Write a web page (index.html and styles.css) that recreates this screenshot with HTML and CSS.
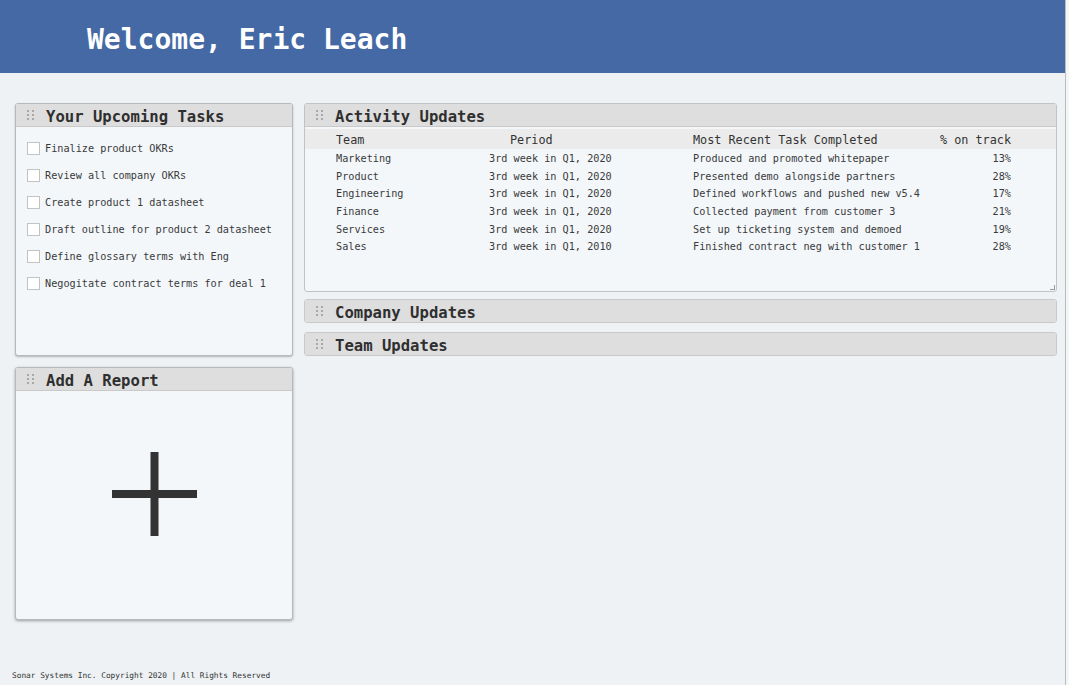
FILE: index.html
```html
<!DOCTYPE html>
<html>
<head>
<meta charset="utf-8">
<link rel="stylesheet" href="styles.css">
</head>
<body>
<div class="page">
  <header class="topbar"><h1 class="welcome">Welcome, Eric Leach</h1></header>
  <main class="main">
    <div class="col-left">
      <section class="panel tasks">
        <div class="panel-head">
          <svg class="handle" width="8" height="10" viewBox="0 0 8 10"><g fill="#a8a8a8"><rect x="0" y="0" width="2" height="2"/><rect x="5" y="0" width="2" height="2"/><rect x="0" y="4" width="2" height="2"/><rect x="5" y="4" width="2" height="2"/><rect x="0" y="8" width="2" height="2"/><rect x="5" y="8" width="2" height="2"/></g></svg>
          <span class="panel-title">Your Upcoming Tasks</span>
        </div>
        <ul class="task-list">
          <li class="task"><span class="box"></span>Finalize product OKRs</li>
          <li class="task"><span class="box"></span>Review all company OKRs</li>
          <li class="task"><span class="box"></span>Create product 1 datasheet</li>
          <li class="task"><span class="box"></span>Draft outline for product 2 datasheet</li>
          <li class="task"><span class="box"></span>Define glossary terms with Eng</li>
          <li class="task"><span class="box"></span>Negogitate contract terms for deal 1</li>
        </ul>
      </section>
      <section class="panel report">
        <div class="panel-head">
          <svg class="handle" width="8" height="10" viewBox="0 0 8 10"><g fill="#a8a8a8"><rect x="0" y="0" width="2" height="2"/><rect x="5" y="0" width="2" height="2"/><rect x="0" y="4" width="2" height="2"/><rect x="5" y="4" width="2" height="2"/><rect x="0" y="8" width="2" height="2"/><rect x="5" y="8" width="2" height="2"/></g></svg>
          <span class="panel-title">Add A Report</span>
        </div>
        <div class="report-body">
          <svg class="plus" width="85" height="84" viewBox="0 0 85 84"><g fill="#333333"><rect x="38.5" y="0" width="8" height="84"/><rect x="0" y="38" width="85" height="8"/></g></svg>
        </div>
      </section>
    </div>
    <div class="col-right">
      <section class="panel activity">
        <div class="panel-head">
          <svg class="handle" width="8" height="10" viewBox="0 0 8 10"><g fill="#a8a8a8"><rect x="0" y="0" width="2" height="2"/><rect x="5" y="0" width="2" height="2"/><rect x="0" y="4" width="2" height="2"/><rect x="5" y="4" width="2" height="2"/><rect x="0" y="8" width="2" height="2"/><rect x="5" y="8" width="2" height="2"/></g></svg>
          <span class="panel-title">Activity Updates</span>
        </div>
        <div class="table">
          <div class="trow thead">
            <span class="c-team">Team</span>
            <span class="c-period head-period">Period</span>
            <span class="c-task">Most Recent Task Completed</span>
            <span class="c-pct">% on track</span>
          </div>
          <div class="trow"><span class="c-team">Marketing</span><span class="c-period">3rd week in Q1, 2020</span><span class="c-task">Produced and promoted whitepaper</span><span class="c-pct">13%</span></div>
          <div class="trow"><span class="c-team">Product</span><span class="c-period">3rd week in Q1, 2020</span><span class="c-task">Presented demo alongside partners</span><span class="c-pct">28%</span></div>
          <div class="trow"><span class="c-team">Engineering</span><span class="c-period">3rd week in Q1, 2020</span><span class="c-task">Defined workflows and pushed new v5.4</span><span class="c-pct">17%</span></div>
          <div class="trow"><span class="c-team">Finance</span><span class="c-period">3rd week in Q1, 2020</span><span class="c-task">Collected payment from customer 3</span><span class="c-pct">21%</span></div>
          <div class="trow"><span class="c-team">Services</span><span class="c-period">3rd week in Q1, 2020</span><span class="c-task">Set up ticketing system and demoed</span><span class="c-pct">19%</span></div>
          <div class="trow"><span class="c-team">Sales</span><span class="c-period">3rd week in Q1, 2010</span><span class="c-task">Finished contract neg with customer 1</span><span class="c-pct">28%</span></div>
        </div>
        <span class="resize"></span>
      </section>
      <section class="panel bar company">
        <div class="panel-head">
          <svg class="handle" width="8" height="10" viewBox="0 0 8 10"><g fill="#a8a8a8"><rect x="0" y="0" width="2" height="2"/><rect x="5" y="0" width="2" height="2"/><rect x="0" y="4" width="2" height="2"/><rect x="5" y="4" width="2" height="2"/><rect x="0" y="8" width="2" height="2"/><rect x="5" y="8" width="2" height="2"/></g></svg>
          <span class="panel-title">Company Updates</span>
        </div>
      </section>
      <section class="panel bar team">
        <div class="panel-head">
          <svg class="handle" width="8" height="10" viewBox="0 0 8 10"><g fill="#a8a8a8"><rect x="0" y="0" width="2" height="2"/><rect x="5" y="0" width="2" height="2"/><rect x="0" y="4" width="2" height="2"/><rect x="5" y="4" width="2" height="2"/><rect x="0" y="8" width="2" height="2"/><rect x="5" y="8" width="2" height="2"/></g></svg>
          <span class="panel-title">Team Updates</span>
        </div>
      </section>
    </div>
  </main>
  <footer class="footer">Sonar Systems Inc. Copyright 2020 | All Rights Reserved</footer>
</div>
</body>
</html>
```

FILE: styles.css
```css
html, body {
  margin: 0;
  padding: 0;
  background: #f4f5f6;
}
body {
  font-family: "DejaVu Sans Mono", "Liberation Mono", monospace;
  color: #333;
}
.page {
  width: 1066px;
  height: 685px;
  background: #eef2f5;
  border-right: 1px solid #b9bcc0;
  box-sizing: border-box;
}
.topbar {
  height: 73px;
  background: #4469a5;
  display: flex;
  align-items: center;
  padding-left: 87px;
  width: 1065px;
  box-sizing: border-box;
}
.welcome {
  margin: 0;
  padding-top: 6px;
  font-size: 28px;
  font-weight: bold;
  color: #ffffff;
}
.main {
  display: flex;
  gap: 11px;
  padding: 30px 0 0 15px;
}
.col-left {
  width: 278px;
  display: flex;
  flex-direction: column;
  gap: 11px;
}
.col-right {
  width: 753px;
  display: flex;
  flex-direction: column;
}
.panel {
  position: relative;
  background: #f3f7fa;
  border: 1px solid #b9b9b9;
  border-radius: 3px;
  box-sizing: border-box;
  box-shadow: 0 1px 2px rgba(0, 0, 0, 0.25);
  overflow: hidden;
}
.panel-head {
  height: 22px;
  background: #dedede;
  border-bottom: 1px solid #c9c9c9;
  display: flex;
  align-items: center;
  padding-left: 11px;
}
.handle {
  display: block;
  margin-right: 11px;
  flex: none;
}
.panel-title {
  font-size: 15.6px;
  font-weight: bold;
  color: #2f2f2f;
  line-height: 22px;
  padding-top: 3px;
}
.tasks {
  height: 253px;
}
.task-list {
  list-style: none;
  margin: 0;
  padding: 15px 0 0 11px;
}
.task {
  display: flex;
  align-items: center;
  height: 27px;
  font-size: 10.2px;
  color: #3a3a3a;
}
.task:first-child {
  margin-top: -7px;
}
.box {
  width: 13px;
  height: 13px;
  box-sizing: border-box;
  background: #ffffff;
  border: 1px solid #c3c3c3;
  margin-right: 5px;
  flex: none;
}
.report {
  height: 253px;
  box-shadow: 0 1px 3px rgba(0, 0, 0, 0.35);
}
.report-body {
  display: flex;
  justify-content: center;
  padding-top: 61px;
}
.plus {
  display: block;
}
.activity {
  height: 189px;
  box-shadow: none;
  border-color: #c2c2c2;
}
.table {
  margin-top: 2px;
  font-size: 10.2px;
  color: #3a3a3a;
}
.trow {
  display: grid;
  grid-template-columns: 153px 204px 238px 80px;
  padding-left: 31px;
  height: 17.6px;
  align-items: center;
}
.trow.thead {
  height: 20px;
  box-sizing: border-box;
  padding-top: 2px;
  background: #ebebeb;
  font-size: 11.8px;
  color: #333;
  margin-bottom: 1px;
}
.c-pct {
  text-align: right;
}
.head-period {
  padding-left: 21px;
}
.resize {
  position: absolute;
  right: 1px;
  bottom: 1px;
  width: 4px;
  height: 4px;
  border-right: 1px solid #999;
  border-bottom: 1px solid #999;
}
.bar {
  height: 24px;
  box-shadow: none;
  border-color: #c9c9c9;
}
.bar .panel-head {
  border-bottom: none;
}
.company {
  margin-top: 7px;
}
.team {
  margin-top: 9px;
}
.footer {
  margin-top: 51px;
  padding-left: 12px;
  font-size: 7.8px;
  color: #333;
  line-height: 10px;
}
```
